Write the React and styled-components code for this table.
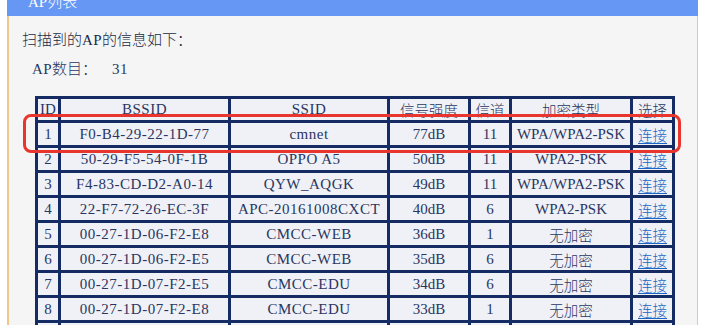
import React from "react";
import styled, { createGlobalStyle } from "styled-components";

const GlobalStyle = createGlobalStyle`
  html, body {
    margin: 0;
    padding: 0;
    background: #ffffff;
  }
  body {
    font-family: "Liberation Serif", "Noto Sans CJK SC", serif;
  }
`;

const Page = styled.div`
  width: 712px;
  height: 325px;
  overflow: hidden;
  background: #ffffff;
`;

const Frame = styled.div`
  margin-left: 7px;
  width: 691px;
`;

const TitleBar = styled.div`
  height: 30px;
  margin-top: -14px;
  padding-left: 21px;
  background: #6797f4;
  color: #ffffff;
  font-size: 15px;
  line-height: 30px;
`;

const Panel = styled.div`
  height: 400px;
  padding: 13px 0 0 13px;
  background: #f5f5f5;
  border-left: 2px solid #f2c68a;
  border-right: 1px solid #f2c68a;
`;

const Intro = styled.div`
  height: 20px;
  line-height: 20px;
  color: #222a44;
  font-size: 15px;
  letter-spacing: 0.4px;
`;

const Count = styled.div`
  height: 20px;
  margin: 9px 0 0 10px;
  line-height: 20px;
  color: #2c3763;
  font-size: 15px;
  letter-spacing: 0.4px;
`;

const CountValue = styled.span`
  margin-left: 15px;
`;

const Han = styled.span`
  font-family: "Noto Sans CJK SC", sans-serif;
  font-size: ${p => p.size || 14.5}px;
  font-weight: 300;
  letter-spacing: 0;
`;

const TableWrap = styled.div`
  position: relative;
  width: 637px;
  margin: 18px 0 0 13px;
`;

const Grid = styled.table`
  width: 637px;
  table-layout: fixed;
  border-collapse: separate;
  border-spacing: 0;
  border-top: 3px solid #142c63;
  border-left: 3px solid #142c63;
  box-sizing: border-box;
`;

const Cell = styled.td`
  box-sizing: border-box;
  height: ${p => (p.head ? 24 : 25)}px;
  padding: 0;
  border-right: 3px solid #142c63;
  border-bottom: 3px solid #142c63;
  background: #eff1f6;
  color: #2a3561;
  font-size: 15px;
  font-weight: normal;
  letter-spacing: ${p => (p.spread ? 0.5 : 0)}px;
  text-align: center;
  vertical-align: middle;
  white-space: nowrap;
  overflow: hidden;
`;

const Link = styled.a`
  color: #1b66c4;
  text-decoration: underline;
  text-underline-offset: 2px;
  font-family: "Noto Sans CJK SC", sans-serif;
  font-size: 14.5px;
  font-weight: 300;
  letter-spacing: 0;
  cursor: pointer;
`;

const Highlight = styled.div`
  position: absolute;
  left: -12px;
  top: 18px;
  width: 658px;
  height: 39px;
  box-sizing: border-box;
  border: 3.5px solid #e8362e;
  border-radius: 8px;
  pointer-events: none;
`;

const widths = [23, 170, 159, 81, 41, 121, 42];

const rows = [
  ["1", "F0-B4-29-22-1D-77", "cmnet", "77dB", "11", "WPA/WPA2-PSK"],
  ["2", "50-29-F5-54-0F-1B", "OPPO A5", "50dB", "11", "WPA2-PSK"],
  ["3", "F4-83-CD-D2-A0-14", "QYW_AQGK", "49dB", "11", "WPA/WPA2-PSK"],
  ["4", "22-F7-72-26-EC-3F", "APC-20161008CXCT", "40dB", "6", "WPA2-PSK"],
  ["5", "00-27-1D-06-F2-E8", "CMCC-WEB", "36dB", "1", "无加密"],
  ["6", "00-27-1D-06-F2-E5", "CMCC-WEB", "35dB", "6", "无加密"],
  ["7", "00-27-1D-07-F2-E5", "CMCC-EDU", "34dB", "6", "无加密"],
  ["8", "00-27-1D-07-F2-E8", "CMCC-EDU", "33dB", "1", "无加密"],
  ["9", "", "", "", "", ""],
];

const isHan = s => /[\u4e00-\u9fff]/.test(s);

function Text({ value }) {
  return isHan(value) ? <Han>{value}</Han> : value;
}

export default function App() {
  return (
    <Page>
      <GlobalStyle />
      <Frame>
        <TitleBar>
          AP<Han size={15}>列表</Han>
        </TitleBar>
        <Panel>
          <Intro>
            <Han size={15}>扫描到的</Han>AP<Han size={15}>的信息如下：</Han>
          </Intro>
          <Count>
            AP<Han size={15}>数目：</Han>
            <CountValue>31</CountValue>
          </Count>
          <TableWrap>
            <Grid>
              <colgroup>
                {widths.map((w, i) => (
                  <col key={i} style={{ width: w }} />
                ))}
              </colgroup>
              <thead>
                <tr>
                  <Cell as="th" head>ID</Cell>
                  <Cell as="th" head spread>BSSID</Cell>
                  <Cell as="th" head spread>SSID</Cell>
                  <Cell as="th" head><Han>信号强度</Han></Cell>
                  <Cell as="th" head><Han>信道</Han></Cell>
                  <Cell as="th" head><Han>加密类型</Han></Cell>
                  <Cell as="th" head><Han>选择</Han></Cell>
                </tr>
              </thead>
              <tbody>
                {rows.map(r => (
                  <tr key={r[0]}>
                    {r.map((v, i) => (
                      <Cell key={i} spread={i === 1 || i === 2}>
                        <Text value={v} />
                      </Cell>
                    ))}
                    <Cell>{r[1] ? <Link>连接</Link> : null}</Cell>
                  </tr>
                ))}
              </tbody>
            </Grid>
            <Highlight />
          </TableWrap>
        </Panel>
      </Frame>
    </Page>
  );
}
